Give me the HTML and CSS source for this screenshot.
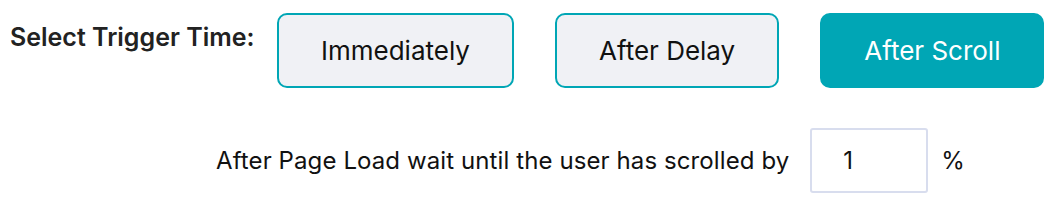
FILE: index.html
```html
<!DOCTYPE html>
<html lang="en">
<head>
    <meta charset="UTF-8">
    <meta name="viewport" content="width=device-width, initial-scale=1.0">
    <title>Trigger Time</title>
    <link rel="stylesheet" href="styles.css">
</head>
<body>
    <div class="trigger">
        <div class="trigger-row">
            <span class="trigger-label">Select Trigger Time:</span>
            <div class="options">
                <button type="button" class="option">Immediately</button>
                <button type="button" class="option">After Delay</button>
                <button type="button" class="option active">After Scroll</button>
            </div>
        </div>
        <div class="scroll-row">
            <span class="scroll-text">After Page Load wait until the user has scrolled by</span>
            <input type="text" class="scroll-input" value="1">
            <span class="unit">%</span>
        </div>
    </div>
</body>
</html>
```

FILE: styles.css
```css
body {
    font-family: Inter, "Open Sans", sans-serif;
    background-color: #ffffff;
    color: #111111;
    margin: 0;
}
.trigger {
    padding: 13px 0 0 10px;
}
.trigger-row {
    display: flex;
    align-items: flex-start;
}
.trigger-label {
    width: 267px;
    padding-top: 9px;
    font-size: 25px;
    font-weight: 600;
    color: #222222;
}
.options {
    display: flex;
    gap: 41px;
}
.option {
    height: 75px;
    padding: 0 42px;
    font-family: inherit;
    font-size: 26px;
    color: #111111;
    background-color: #f0f1f5;
    border: 2px solid #00a6b5;
    border-radius: 10px;
    cursor: pointer;
}
.option.active {
    color: #ffffff;
    background-color: #00a6b5;
}
.scroll-row {
    display: flex;
    align-items: center;
    margin-top: 40px;
    padding-left: 206px;
}
.scroll-text {
    font-size: 24px;
    letter-spacing: 0.1px;
}
.scroll-input {
    width: 118px;
    height: 65px;
    box-sizing: border-box;
    margin-left: 21px;
    padding: 0 0 0 31px;
    font-family: inherit;
    font-size: 24px;
    color: #111111;
    border: 2px solid #d8ddee;
    border-radius: 3px;
}
.unit {
    margin-left: 13px;
    font-size: 24px;
}
```
